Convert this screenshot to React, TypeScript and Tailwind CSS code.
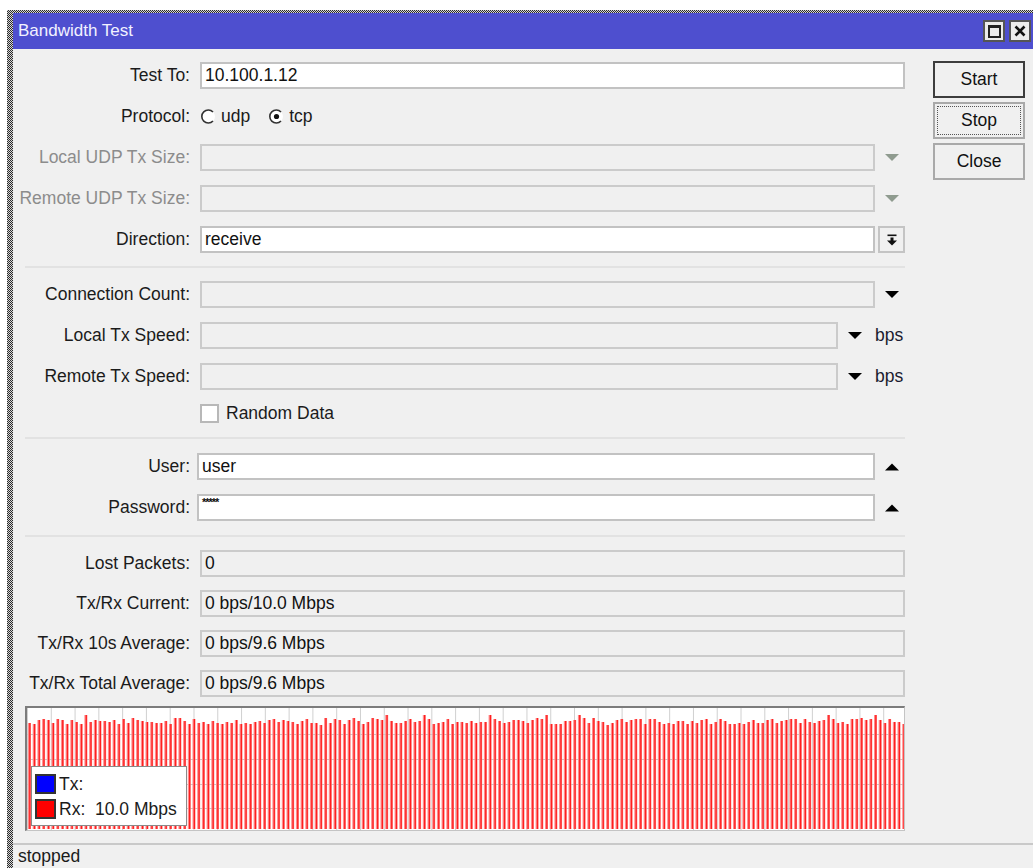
import React from "react";

// Bar series for the traffic graph (rx samples, tx is idle).
const BAR_COUNT = 187;
const BAR_STEP = 4.7;
let seed = 11;
const rnd = () => {
  seed = (seed * 9301 + 49297) % 233280;
  return seed / 233280;
};
const RX_TOPS = Array.from({ length: BAR_COUNT }, () => {
  const r = rnd();
  return r > 0.93 ? 7 : 10 + Math.round(r * 7);
});

const font = { fontFamily: '"Liberation Sans", Arial, sans-serif' };

const DownArrow: React.FC<{ muted?: boolean }> = ({ muted }) => (
  <svg width="14" height="8" viewBox="0 0 14 8">
    <polygon points="0,0 14,0 7,7" fill={muted ? "#8f9b8f" : "#000"} />
  </svg>
);

const UpArrow: React.FC = () => (
  <svg width="14" height="8" viewBox="0 0 14 8">
    <polygon points="0,7.5 14,7.5 7,0.5" fill="#000" />
  </svg>
);

const Radio: React.FC<{ checked?: boolean }> = ({ checked }) => (
  <svg width="15" height="15" viewBox="0 0 15 15">
    <circle cx="7.5" cy="7.5" r="6.5" fill="#fff" />
    <path d="M12 3 A6.5 6.5 0 1 0 12 12" fill="none" stroke="#333" strokeWidth="1.6" />
    {checked && <circle cx="7.5" cy="7.5" r="2.6" fill="#111" />}
  </svg>
);

const Row: React.FC<{
  label?: string;
  muted?: boolean;
  tall?: string;
  children: React.ReactNode;
}> = ({ label, muted, tall = "h-[41px]", children }) => (
  <div className={`flex items-center ${tall}`}>
    <div
      className={`w-[177px] shrink-0 whitespace-nowrap text-right text-[17.5px] ${
        muted ? "text-[#8c8c8c]" : "text-[#1b1b1b]"
      }`}
    >
      {label ? `${label}:` : ""}
    </div>
    {children}
  </div>
);

const Sep: React.FC<{ h: string }> = ({ h }) => (
  <div className={`flex items-center pl-[12px] ${h}`}>
    <div className="h-[2px] w-[880px] bg-[#e2e2e2]" />
  </div>
);

const Field: React.FC<{ w: string; value?: string; disabled?: boolean }> = ({
  w,
  value,
  disabled,
}) => (
  <div
    className={`flex h-[27px] items-center border-2 pl-[3px] text-[17.5px] text-[#111] ${w} ${
      disabled ? "border-[#cbcbcb] bg-[#f0f0f0]" : "border-[#c2c2c2] bg-white"
    }`}
  >
    {value}
  </div>
);

const Button: React.FC<{ label: string; kind?: "default" | "focus" | "plain" }> = ({
  label,
  kind = "plain",
}) => (
  <div
    className={`flex h-[37px] w-[92px] items-center justify-center bg-[#f0f0f0] text-[17.5px] text-[#111] ${
      kind === "default" ? "border-2 border-[#3d3d3d]" : "border-2 border-[#a9a9a9]"
    }`}
  >
    {kind === "focus" ? (
      <div className="flex h-[29px] w-[84px] items-center justify-center border border-dotted border-[#555]">
        {label}
      </div>
    ) : (
      label
    )}
  </div>
);

const Graph: React.FC = () => {
  const cols = 37;
  const colW = 880 / cols;
  return (
    <div className="relative ml-[12px] h-[125px] w-[880px] border border-[#c4c4c4] border-l-2 border-t-2 border-l-[#7c7c7c] border-t-[#7c7c7c] bg-white">
      <svg width="877" height="122" viewBox="0 0 877 122" className="block">
        {Array.from({ length: cols }, (_, i) => (
          <line key={`v${i}`} x1={i * colW + 0.5} y1="0" x2={i * colW + 0.5} y2="122" stroke="#d0d0d0" />
        ))}
        {[26, 51, 76, 100].map((y) => (
          <line key={`h${y}`} x1="0" y1={y + 0.5} x2="877" y2={y + 0.5} stroke="#c8c8c8" />
        ))}
        {RX_TOPS.map((top, i) => {
          const x = 1 + i * BAR_STEP;
          return (
            <g key={i}>
              <rect x={x} y={top} width="3" height={121 - top} fill="#ff8a8a" />
              <rect x={x + 1.2} y={top} width="1.3" height={121 - top} fill="#ff1f1f" />
            </g>
          );
        })}
      </svg>
      <div className="absolute left-[4px] top-[58px] flex h-[60px] w-[156px] flex-col justify-center gap-[3px] border border-[#8a8a8a] bg-white pl-[3px] text-[17.5px] leading-[22px] text-[#1b1b1b]">
        <div className="flex items-center gap-[3px]">
          <span className="inline-block h-[20px] w-[21px] border-2 border-[#333] bg-[#0000ff]" />
          <span>Tx:</span>
        </div>
        <div className="flex items-center gap-[3px]">
          <span className="inline-block h-[20px] w-[21px] border-2 border-[#333] bg-[#ff0000]" />
          <span>Rx:&nbsp; 10.0 Mbps</span>
        </div>
      </div>
    </div>
  );
};

export default function App() {
  return (
    <div className="h-[868px] w-[1033px] overflow-hidden bg-white pl-[7px] pt-[10px]" style={font}>
      <div className="h-[900px] w-[1045px] bg-[repeating-conic-gradient(#2a2a2a_0_25%,#d8d8d8_0_50%)] bg-[length:2px_2px] pl-[6px] pt-[3px]">
        <div className="flex h-full flex-col bg-[#f0f0f0]">
          {/* title bar */}
          <div className="flex h-[36px] items-center bg-[#4e4fcf] pl-[5px]">
            <span className="text-[17px] text-[#f2f2ff]">Bandwidth Test</span>
            <div className="ml-auto mr-[21px] flex gap-[4px]">
              <div className="flex h-[22px] w-[22px] items-center justify-center border-2 border-[#555] bg-[#ececec]">
                <div className="h-[13px] w-[13px] border-2 border-[#222] border-t-[3px]" />
              </div>
              <div className="flex h-[22px] w-[22px] items-center justify-center border-2 border-[#555] bg-[#ececec]">
                <svg width="12" height="12" viewBox="0 0 12 12">
                  <path d="M1.5 1.5 L10.5 10.5 M10.5 1.5 L1.5 10.5" stroke="#111" strokeWidth="2.6" />
                </svg>
              </div>
            </div>
          </div>

          <div className="flex">
            {/* form */}
            <div className="w-[910px] shrink-0 pt-[6px]">
              <Row label="Test To">
                <div className="ml-[10px]">
                  <Field w="w-[705px]" value="10.100.1.12" />
                </div>
              </Row>
              <Row label="Protocol">
                <div className="ml-[11px] flex items-center text-[17.5px] text-[#1b1b1b]">
                  <Radio />
                  <span className="ml-[5px]">udp</span>
                  <span className="ml-[19px]">
                    <Radio checked />
                  </span>
                  <span className="ml-[5px]">tcp</span>
                </div>
              </Row>
              <Row label="Local UDP Tx Size" muted>
                <div className="ml-[10px] flex items-center">
                  <Field w="w-[675px]" disabled />
                  <div className="flex w-[34px] justify-center">
                    <DownArrow muted />
                  </div>
                </div>
              </Row>
              <Row label="Remote UDP Tx Size" muted>
                <div className="ml-[10px] flex items-center">
                  <Field w="w-[675px]" disabled />
                  <div className="flex w-[34px] justify-center">
                    <DownArrow muted />
                  </div>
                </div>
              </Row>
              <Row label="Direction">
                <div className="ml-[10px] flex items-center">
                  <Field w="w-[675px]" value="receive" />
                  <div className="ml-[3px] flex h-[27px] w-[27px] items-center justify-center border-2 border-[#c4c4c4] bg-[#f0f0f0]">
                    <svg width="12" height="12" viewBox="0 0 12 12">
                      <rect x="1.5" y="0.5" width="9" height="1.6" fill="#111" />
                      <rect x="4.5" y="3.5" width="3" height="3.5" fill="#111" />
                      <polygon points="1,6.5 11,6.5 6,11.5" fill="#111" />
                    </svg>
                  </div>
                </div>
              </Row>

              <Sep h="h-[14px]" />

              <Row label="Connection Count">
                <div className="ml-[10px] flex items-center">
                  <Field w="w-[675px]" disabled />
                  <div className="flex w-[34px] justify-center">
                    <DownArrow />
                  </div>
                </div>
              </Row>
              <Row label="Local Tx Speed">
                <div className="ml-[10px] flex items-center">
                  <Field w="w-[638px]" disabled />
                  <div className="flex w-[34px] justify-center">
                    <DownArrow />
                  </div>
                  <span className="ml-[3px] text-[17.5px] text-[#1b1b2e]">bps</span>
                </div>
              </Row>
              <Row label="Remote Tx Speed">
                <div className="ml-[10px] flex items-center">
                  <Field w="w-[638px]" disabled />
                  <div className="flex w-[34px] justify-center">
                    <DownArrow />
                  </div>
                  <span className="ml-[3px] text-[17.5px] text-[#1b1b2e]">bps</span>
                </div>
              </Row>
              <Row tall="h-[32px]">
                <div className="ml-[10px] flex items-center">
                  <span className="inline-block h-[19px] w-[19px] border-2 border-[#b8b8b8] bg-white" />
                  <span className="ml-[7px] text-[17.5px] text-[#1b1b1b]">Random Data</span>
                </div>
              </Row>

              <Sep h="h-[17px]" />

              <Row label="User">
                <div className="ml-[7px] flex items-center">
                  <Field w="w-[678px]" value="user" />
                  <div className="flex w-[34px] justify-center">
                    <UpArrow />
                  </div>
                </div>
              </Row>
              <Row label="Password">
                <div className="ml-[7px] flex items-center">
                  <div className="flex h-[27px] w-[678px] items-start border-2 border-[#c2c2c2] bg-white pl-[3px] pt-[1px] text-[11px] font-bold leading-none tracking-[-1px] text-[#111]">
                    *****
                  </div>
                  <div className="flex w-[34px] justify-center">
                    <UpArrow />
                  </div>
                </div>
              </Row>

              <Sep h="h-[15px]" />

              <Row label="Lost Packets" tall="h-[40px]">
                <div className="ml-[10px]">
                  <Field w="w-[705px]" value="0" disabled />
                </div>
              </Row>
              <Row label="Tx/Rx Current" tall="h-[40px]">
                <div className="ml-[10px]">
                  <Field w="w-[705px]" value="0 bps/10.0 Mbps" disabled />
                </div>
              </Row>
              <Row label="Tx/Rx 10s Average" tall="h-[40px]">
                <div className="ml-[10px]">
                  <Field w="w-[705px]" value="0 bps/9.6 Mbps" disabled />
                </div>
              </Row>
              <Row label="Tx/Rx Total Average" tall="h-[40px]">
                <div className="ml-[10px]">
                  <Field w="w-[705px]" value="0 bps/9.6 Mbps" disabled />
                </div>
              </Row>

              <div className="mt-[3px]">
                <Graph />
              </div>
            </div>

            {/* buttons */}
            <div className="ml-[10px] flex flex-col gap-[4px] pt-[12px]">
              <Button label="Start" kind="default" />
              <Button label="Stop" kind="focus" />
              <Button label="Close" />
            </div>
          </div>

          {/* status bar */}
          <div className="mt-[12px] h-[2px] bg-[#c9c9c9]" />
          <div className="pl-[5px] pt-[1px] text-[17.5px] leading-[20px] text-[#1b1b1b]">stopped</div>
        </div>
      </div>
    </div>
  );
}
